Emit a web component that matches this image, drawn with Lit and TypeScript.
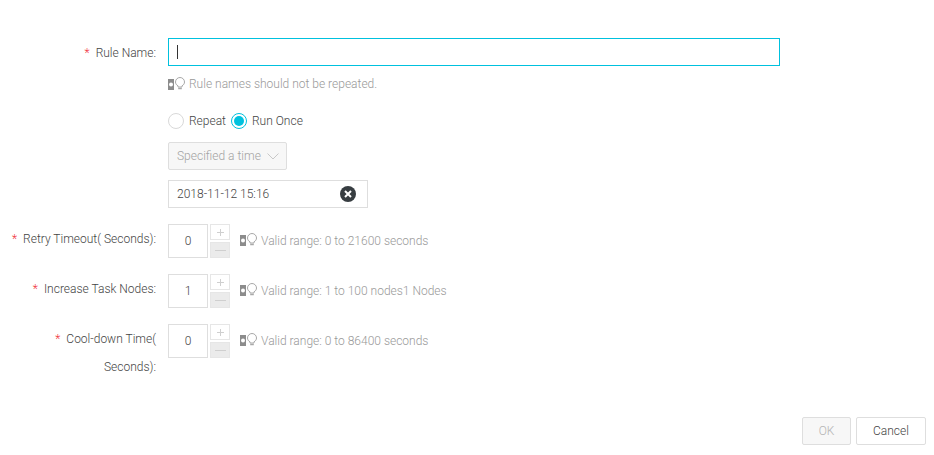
import { LitElement, html, css } from "lit";
import { customElement } from "lit/decorators.js";

const bulb = html`<span class="tip-icon"><svg width="18" height="16" viewBox="0 0 18 16" fill="none">
  <rect x="0" y="3" width="6" height="11" fill="#8c8c8c"></rect>
  <circle cx="3" cy="8.500" r="2" fill="#fff"></circle>
  <path d="M10 9.800C8.400 9 7.500 7.600 7.500 6 7.500 3.500 9.500 1.500 12 1.500s4.500 2 4.500 4.500c0 1.600-.9 3-2.500 3.800V11h-4z" stroke="#a8a8a8" stroke-width="1"></path>
  <path d="M10.200 12.500h3.600" stroke="#a8a8a8" stroke-width="1.500"></path>
</svg></span>`;

@customElement("app-root")
export class AppRoot extends LitElement {
  static styles = css`
    :host {
      display: flex;
      flex-direction: column;
      min-height: 455px;
      box-sizing: border-box;
      padding-top: 38px;
      font-family: Roboto, "Liberation Sans", sans-serif;
      font-size: 12px;
      font-weight: 300;
      color: #444;
      background: #fff;
    }
    .row { display: flex; gap: 12px; }
    .label {
      width: 156px;
      flex: none;
      box-sizing: border-box;
      padding-top: 1px;
      text-align: right;
      line-height: 28px;
    }
    .req { color: #f0303a; margin-right: 6px; }
    .body { display: flex; flex-direction: column; align-items: flex-start; }
    .name-input {
      width: 612px;
      height: 28px;
      box-sizing: border-box;
      border: 1px solid #00c1de;
      display: flex;
      align-items: center;
      padding-left: 8px;
    }
    .caret { width: 1px; height: 14px; background: #333; }
    .tip {
      display: flex;
      align-items: center;
      gap: 3px;
      color: #999;
    }
    .tip-icon { display: flex; flex: none; }
    .num-body .tip-icon { margin-bottom: 2px; }
    .hint-top { height: 16px; margin-top: 10px; }
    .radios { display: flex; align-items: center; margin-top: 20px; height: 18px; }
    .radio {
      width: 16px;
      height: 16px;
      box-sizing: border-box;
      border-radius: 50%;
      border: 1px solid #d9d9d9;
      flex: none;
      margin-right: 5px;
      display: flex;
      align-items: center;
      justify-content: center;
    }
    .radio.on { border-color: #00c1de; }
    .radio.on span { width: 10px; height: 10px; border-radius: 50%; background: #00c1de; }
    .radio-text { margin-right: 5px; }
    .select {
      margin-top: 12px;
      width: 119px;
      height: 28px;
      box-sizing: border-box;
      border: 1px solid #dedede;
      border-radius: 2px;
      background: #f7f7f7;
      color: #a3a3a3;
      display: flex;
      align-items: center;
      justify-content: space-between;
      padding: 0 7px 0 8px;
    }
    .date {
      margin-top: 10px;
      width: 200px;
      height: 28px;
      box-sizing: border-box;
      border: 1px solid #dedede;
      display: flex;
      align-items: center;
      justify-content: space-between;
      padding: 0 11px 0 8px;
    }
    .num-row { margin-top: 16px; }
    .num-body { flex-direction: row; align-items: center; height: 34px; }
    .num {
      width: 40px;
      height: 34px;
      box-sizing: border-box;
      border: 1px solid #dedede;
      display: flex;
      align-items: center;
      justify-content: center;
    }
    .steps {
      display: flex;
      flex-direction: column;
      gap: 2px;
      margin: 0 10px 0 2px;
    }
    .step {
      width: 20px;
      height: 16px;
      box-sizing: border-box;
      border: 1px solid #e6e6e6;
      display: flex;
      align-items: center;
      justify-content: center;
      background: #fff;
    }
    .step.off { background: #ebebeb; }
    .footer {
      margin-top: auto;
      display: flex;
      justify-content: flex-end;
      gap: 5px;
      padding: 0 8px 10px 0;
    }
    .btn {
      height: 28px;
      box-sizing: border-box;
      border: 1px solid #dedede;
      border-radius: 2px;
      display: flex;
      align-items: center;
      justify-content: center;
    }
    .ok { width: 49px; background: #f7f7f7; color: #b5b5b5; }
    .cancel { width: 70px; background: #fff; }
  `;

  private numRow(label: any, value: string, hint: string) {
    return html`<div class="row num-row">
      <div class="label">${label}</div>
      <div class="body num-body">
        <div class="num">${value}</div>
        <div class="steps">
          <div class="step"><svg width="7" height="7" viewBox="0 0 7 7"><path d="M3.500 0v7M0 3.500h7" stroke="#cfcfcf"></path></svg></div>
          <div class="step off"><svg width="11" height="3" viewBox="0 0 11 3"><path d="M0 1.500h11" stroke="#cfcfcf"></path></svg></div>
        </div>
        <div class="tip">${bulb}<span>${hint}</span></div>
      </div>
    </div>`;
  }

  render() {
    return html`
      <div class="row">
        <div class="label"><span class="req">*</span>Rule Name:</div>
        <div class="body">
          <div class="name-input"><div class="caret"></div></div>
          <div class="tip hint-top">${bulb}<span>Rule names should not be repeated.</span></div>
          <div class="radios">
            <span class="radio"></span><span class="radio-text">Repeat</span>
            <span class="radio on"><span></span></span><span class="radio-text">Run Once</span>
          </div>
          <div class="select">
            <span>Specified a time</span>
            <svg width="12" height="7" viewBox="0 0 12 7" fill="none"><path d="M.5.5 6 6 11.500.5" stroke="#c8c8c8"></path></svg>
          </div>
          <div class="date">
            <span>2018-11-12 15:16</span>
            <svg width="16" height="16" viewBox="0 0 16 16"><circle cx="8" cy="8" r="8" fill="#373d41"></circle><path d="M5 5l6 6M11 5l-6 6" stroke="#fff" stroke-width="2"></path></svg>
          </div>
        </div>
      </div>
      ${this.numRow(html`<span class="req">*</span>Retry Timeout( Seconds):`, "0", "Valid range: 0 to 21600 seconds")}
      ${this.numRow(html`<span class="req">*</span>Increase Task Nodes:`, "1", "Valid range: 1 to 100 nodes1 Nodes")}
      ${this.numRow(html`<span class="req">*</span>Cool-down Time(<br />Seconds):`, "0", "Valid range: 0 to 86400 seconds")}
      <div class="footer">
        <div class="btn ok">OK</div>
        <div class="btn cancel">Cancel</div>
      </div>
    `;
  }
}
